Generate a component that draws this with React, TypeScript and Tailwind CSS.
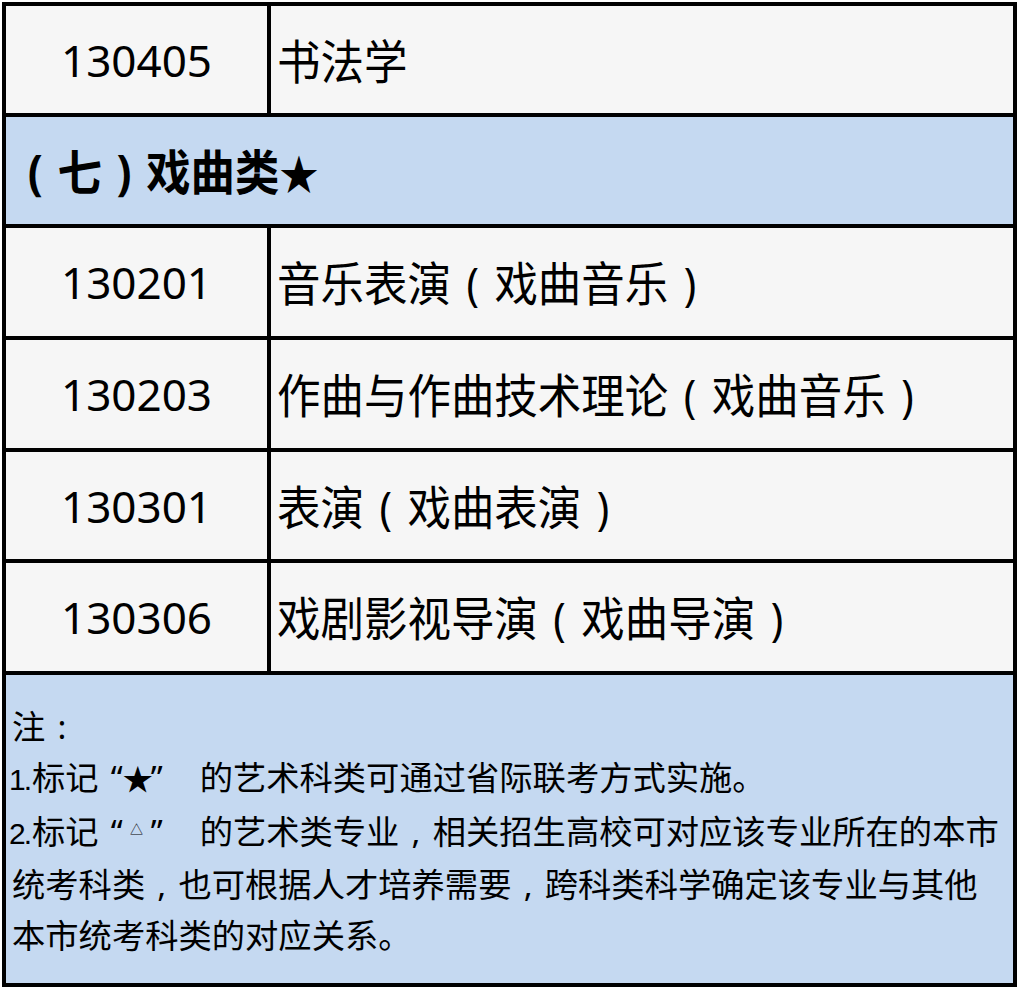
import React from "react";

const CJK = '"Noto Sans CJK SC", "Noto Sans", sans-serif';
const LAT = '"Noto Sans", "Noto Sans CJK SC", sans-serif';
const ARIAL = '"Liberation Sans", sans-serif';

function Line() {
  return <div className="h-[4px] bg-black" />;
}

function P({ c, w, s }: { c: string; w: string; s: string }) {
  return (
    <span className={`inline-block text-center ${w} ${s}`} style={{ fontFamily: LAT }}>
      {c}
    </span>
  );
}

function Name({ parts }: { parts: string[] }) {
  return (
    <span className="inline-block origin-left scale-x-[0.925] text-[47px] whitespace-nowrap">
      {parts[0]}
      {parts.length > 1 && (
        <>
          <P c="(" w="w-[47px]" s="text-[45px]" />
          {parts[1]}
          <P c=")" w="w-[47px]" s="text-[45px]" />
        </>
      )}
    </span>
  );
}

function Row({ code, parts, h }: { code: string; parts: string[]; h: string }) {
  return (
    <div className={`flex bg-[#f6f6f6] ${h}`}>
      <div
        className="w-[261px] flex items-center justify-center text-[44px] text-black"
        style={{ fontFamily: LAT }}
      >
        {code}
      </div>
      <div className="w-[4px] bg-black" />
      <div className="flex-1 flex items-center pl-[6px] text-black overflow-visible">
        <Name parts={parts} />
      </div>
    </div>
  );
}

function Num({ n }: { n: string }) {
  return (
    <span className="ml-[-3px] text-[30px]" style={{ fontFamily: ARIAL }}>
      <span className="tracking-[-2px]">{n}</span>
      <span>.</span>
    </span>
  );
}

function Quote({ sym }: { sym: React.ReactNode }) {
  return (
    <span className="inline-block w-[101px] whitespace-nowrap">
      <span className="inline-block w-[24px] text-right" style={{ fontFamily: LAT }}>
        “
      </span>
      <span className="inline-block w-[28px] text-center">{sym}</span>
      <span className="inline-block w-[49px] text-left" style={{ fontFamily: LAT }}>
        ”
      </span>
    </span>
  );
}

function Comma() {
  return (
    <span className="inline-block w-[33.3px] text-center" style={{ fontFamily: LAT }}>
      ,
    </span>
  );
}

export default function App() {
  return (
    <div className="w-[1019px] h-[989px] bg-white pt-[2px] pl-[2px]" style={{ fontFamily: CJK }}>
      <div className="w-[1015px] border-[4px] border-black flex flex-col">
        <Row code="130405" parts={["书法学"]} h="h-[107px]" />
        <Line />
        <div className="h-[107px] bg-[#c5d9f1] flex items-center pl-[7px] text-black">
          <span className="inline-block origin-left scale-x-[0.925] text-[48px] font-bold whitespace-nowrap">
            <P c="(" w="w-[48px]" s="text-[48px] font-bold" />
            七
            <P c=")" w="w-[48px]" s="text-[48px] font-bold" />
            戏曲类<span className="text-[42px]">★</span>
          </span>
        </div>
        <Line />
        <Row code="130201" parts={["音乐表演", "戏曲音乐"]} h="h-[108px]" />
        <Line />
        <Row code="130203" parts={["作曲与作曲技术理论", "戏曲音乐"]} h="h-[108px]" />
        <Line />
        <Row code="130301" parts={["表演", "戏曲表演"]} h="h-[107px]" />
        <Line />
        <Row code="130306" parts={["戏剧影视导演", "戏曲导演"]} h="h-[108px]" />
        <Line />
        <div className="h-[308px] bg-[#c5d9f1] flex flex-col justify-center pl-[6px] text-[33.3px] leading-[49px] text-black whitespace-nowrap">
          <div>
            注
            <span className="inline-block w-[33.3px] text-center" style={{ fontFamily: LAT }}>
              :
            </span>
          </div>
          <div>
            <Num n="1" />
            标记
            <Quote sym={<span className="text-[30px]">★</span>} />
            的艺术科类可通过省际联考方式实施。
          </div>
          <div>
            <Num n="2" />
            标记
            <Quote sym={<span className="text-[13px] align-[10px]">△</span>} />
            的艺术类专业
            <Comma />
            相关招生高校可对应该专业所在的本市
          </div>
          <div>
            统考科类
            <Comma />
            也可根据人才培养需要
            <Comma />
            跨科类科学确定该专业与其他
          </div>
          <div>本市统考科类的对应关系。</div>
        </div>
      </div>
    </div>
  );
}
